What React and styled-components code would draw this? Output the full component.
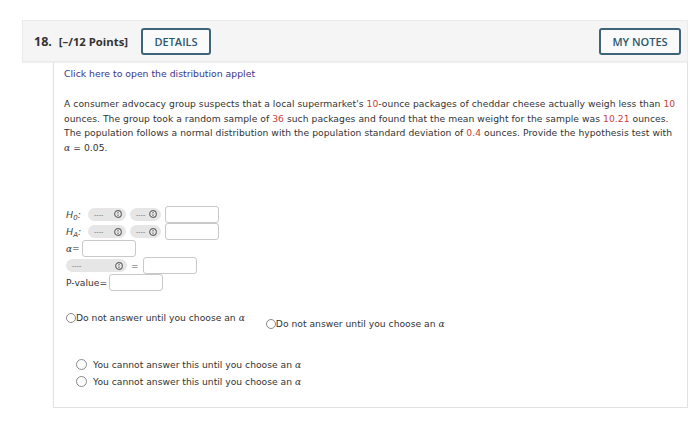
import React from "react";
import styled, { createGlobalStyle } from "styled-components";

const GlobalStyle = createGlobalStyle`
  html, body {
    margin: 0;
    padding: 0;
    background: #ffffff;
  }
  body {
    font-family: "DejaVu Sans", Verdana, sans-serif;
    color: #333;
  }
`;

const Page = styled.div`
  width: 666px;
  padding: 20px 0 0 22px;
`;

const Header = styled.div`
  height: 40px;
  display: flex;
  align-items: center;
  background: #f5f5f5;
  border: 1px solid #ebebeb;
  box-shadow: 0 1px 1px rgba(0, 0, 0, 0.06);
  padding: 0 6px 0 11px;
  font-family: "Open Sans", sans-serif;
`;

const Number = styled.span`
  font-size: 12.5px;
  font-weight: 700;
  color: #333;
`;

const Points = styled.span`
  font-size: 11.3px;
  font-weight: 700;
  color: #333;
  margin-left: 7px;
`;

const OutlineButton = styled.button`
  height: 27px;
  width: ${({ w }) => w}px;
  margin-left: ${({ ml }) => ml || 0};
  border: 2px solid #3e6479;
  border-radius: 3px;
  background: #fafafa;
  color: #2e5870;
  font-family: "Open Sans", sans-serif;
  font-size: 11px;
  font-weight: 600;
  padding: 0;
`;

const Spacer = styled.div`
  flex: 1;
`;

const Body = styled.div`
  margin-left: 31px;
  height: 346px;
  box-sizing: border-box;
  border: 1px solid #e2e2e2;
  border-top: none;
  box-shadow: 0 1px 1px rgba(0, 0, 0, 0.05);
  padding: 5px 10px 0 10px;
`;

const Link = styled.div`
  font-size: 9.3px;
  color: #3a3588;
  line-height: 14px;
`;

const Para = styled.p`
  margin: 16px 0 0 0;
  font-size: 9.2px;
  line-height: 14.5px;
  letter-spacing: 0.04px;
  color: #333;
`;

const Red = styled.span`
  color: #c8423b;
`;

const NoWrap = styled.span`
  white-space: nowrap;
`;

const Alpha = styled.i`
  font-family: "DejaVu Serif", serif;
  font-style: italic;
  font-size: ${({ size }) => size || "inherit"};
`;

const Form = styled.div`
  margin-top: 50px;
  padding-left: 2px;
  display: flex;
  flex-direction: column;
  font-size: 9.2px;
  color: #333;
`;

const Row = styled.div`
  display: flex;
  align-items: center;
  gap: ${({ gap }) => gap || 6}px;
  height: ${({ h }) => h}px;
`;

const HLabel = styled.span`
  font-family: "DejaVu Sans", sans-serif;
  font-style: italic;
  font-size: 9.5px;
  width: 18px;
  color: #444;
`;

const Sub = styled.sub`
  font-size: 7px;
  vertical-align: -2px;
  line-height: 0;
`;

const Select = styled.div`
  width: ${({ w }) => w}px;
  height: 13px;
  border-radius: 7px;
  background: #e6e6e6;
  display: flex;
  align-items: center;
  justify-content: space-between;
  padding: 0 4px 0 6px;
  box-sizing: border-box;
  font-family: "Liberation Sans", sans-serif;
  font-size: 7px;
  color: #777;
`;

const Input = styled.div`
  width: ${({ w }) => w || 54}px;
  height: 17px;
  border: 1px solid #c9c9c9;
  border-radius: 3px;
  background: #fff;
  box-sizing: border-box;
`;

const Eq = styled.span`
  font-size: 9px;
  color: #555;
`;

const RadioRow = styled.div`
  display: flex;
  align-items: flex-start;
  margin-top: 21px;
  padding-left: 2px;
`;

const RadioItem = styled.label`
  display: flex;
  align-items: center;
  font-size: 9.2px;
  color: #333;
  margin-top: ${({ mt }) => mt || 0}px;
  margin-right: ${({ mr }) => mr || 0}px;
  gap: ${({ gap }) => gap || 0}px;
`;

const Circle = styled.span`
  width: ${({ s }) => s}px;
  height: ${({ s }) => s}px;
  border: 1px solid #8a8a8a;
  border-radius: 50%;
  box-sizing: border-box;
  display: inline-block;
  flex-shrink: 0;
`;

const OptionList = styled.div`
  display: flex;
  flex-direction: column;
  gap: 6px;
  margin-top: 30px;
  padding-left: 12px;
`;

const Chevron = () => (
  <svg width="8" height="8" viewBox="0 0 8 8">
    <circle cx="4" cy="4" r="3.3" fill="#fafafa" stroke="#666" strokeWidth="1.2" />
    <path d="M2.8 3.5 L4 2.4 L5.2 3.5 M2.8 4.5 L4 5.6 L5.2 4.5" stroke="#444" strokeWidth="0.8" fill="none" />
  </svg>
);

const Dropdown = ({ w }) => (
  <Select w={w}>
    <span>----</span>
    <Chevron />
  </Select>
);

const Choice = ({ gap, mt, mr, s, children }) => (
  <RadioItem gap={gap} mt={mt} mr={mr}>
    <Circle s={s} />
    <span>
      {children} <Alpha>α</Alpha>
    </span>
  </RadioItem>
);

const App = () => (
  <>
    <GlobalStyle />
    <Page>
      <Header>
        <Number>18.</Number>
        <Points>[–/12 Points]</Points>
        <OutlineButton w={70} ml="13px">DETAILS</OutlineButton>
        <Spacer />
        <OutlineButton w={82}>MY NOTES</OutlineButton>
      </Header>
      <Body>
        <Link>Click here to open the distribution applet</Link>
        <Para>
          A consumer advocacy group suspects that a local supermarket's <Red>10</Red>-ounce packages of cheddar cheese actually weigh less than <Red>10</Red> ounces. The group took a random sample of <Red>36</Red> such packages and found that the mean weight for the sample was <Red>10.21</Red> ounces. The population follows a normal distribution with the population standard deviation of <Red>0.4</Red> ounces. Provide the hypothesis test with <NoWrap><Alpha>α</Alpha> = 0.05.</NoWrap>
        </Para>
        <Form>
          <Row h={18} gap={4}>
            <HLabel>H<Sub>0</Sub>:</HLabel>
            <Dropdown w={38} />
            <Dropdown w={31} />
            <Input />
          </Row>
          <Row h={17} gap={4}>
            <HLabel>H<Sub>A</Sub>:</HLabel>
            <Dropdown w={38} />
            <Dropdown w={31} />
            <Input />
          </Row>
          <Row h={17} gap={2}>
            <Alpha size="9px">α=</Alpha>
            <Input />
          </Row>
          <Row h={17} gap={4}>
            <Dropdown w={61} />
            <Eq>=</Eq>
            <Input />
          </Row>
          <Row h={17} gap={2}>
            <span>P-value=</span>
            <Input />
          </Row>
        </Form>
        <RadioRow>
          <Choice s={10} mr={21}>Do not answer until you choose an</Choice>
          <Choice s={10} mt={6}>Do not answer until you choose an</Choice>
        </RadioRow>
        <OptionList>
          <Choice s={11} gap={6}>You cannot answer this until you choose an</Choice>
          <Choice s={11} gap={6}>You cannot answer this until you choose an</Choice>
        </OptionList>
      </Body>
    </Page>
  </>
);

export default App;
